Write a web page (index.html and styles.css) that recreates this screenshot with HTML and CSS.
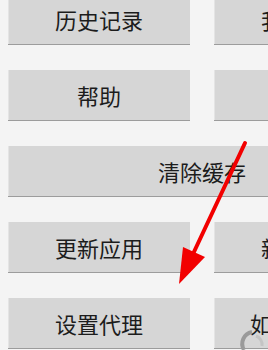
FILE: index.html
```html
<!DOCTYPE html>
<html lang="zh">
<head>
  <meta charset="UTF-8">
  <meta name="viewport" content="width=device-width, initial-scale=1">
  <title>设置</title>
  <link rel="stylesheet" href="styles.css">
</head>
<body>
  <div class="menu">
    <button class="btn">历史记录</button>
    <button class="btn">我的收藏</button>
    <button class="btn">帮助</button>
    <button class="btn">关于</button>
    <button class="btn wide">清除缓存</button>
    <button class="btn">更新应用</button>
    <button class="btn">新版功能</button>
    <button class="btn">设置代理</button>
    <button class="btn">如何去广告</button>
  </div>

  <!-- 标注箭头 -->
  <svg class="arrow" width="268" height="350" viewBox="0 0 268 350">
    <line x1="245" y1="143" x2="193" y2="254" stroke="#f20000" stroke-width="4" stroke-linecap="round"/>
    <polygon points="179,284 183,247 205,257" fill="#f20000"/>
  </svg>

  <svg class="spinner" width="30" height="30" viewBox="0 0 30 30">
    <path d="M6 28 A12 12 0 0 1 14 10" fill="none" stroke="#9a9a9a" stroke-width="4"/>
    <path d="M18 14 A9 9 0 0 1 24 24" fill="none" stroke="#c4c4c4" stroke-width="3"/>
  </svg>
</body>
</html>
```

FILE: styles.css
```css
* {
  box-sizing: border-box;
  margin: 0;
  padding: 0;
}

html, body {
  width: 268px;
  height: 350px;
  overflow: hidden;
  background-color: #f4f4f4;
  font-family: "Noto Sans CJK SC", "Noto Sans", sans-serif;
}

.menu {
  display: grid;
  grid-template-columns: 182px 182px;
  grid-auto-rows: 51px;
  column-gap: 24px;
  row-gap: 25px;
  width: 400px;
  margin-top: -6px;
  padding-left: 8px;
}

.btn {
  background-color: #d6d6d6;
  border: none;
  border-bottom: 1px solid #9c9c9c;
  box-shadow: inset 1px 0 0 #e4e4e4;
  color: #1c1c1c;
  font-family: inherit;
  font-size: 22px;
  line-height: 1;
  white-space: nowrap;
}

.btn.wide {
  grid-column: 1 / 3;
}

.arrow {
  position: absolute;
  top: 0;
  left: 0;
  pointer-events: none;
}

.spinner {
  position: absolute;
  left: 238px;
  top: 322px;
}
```
